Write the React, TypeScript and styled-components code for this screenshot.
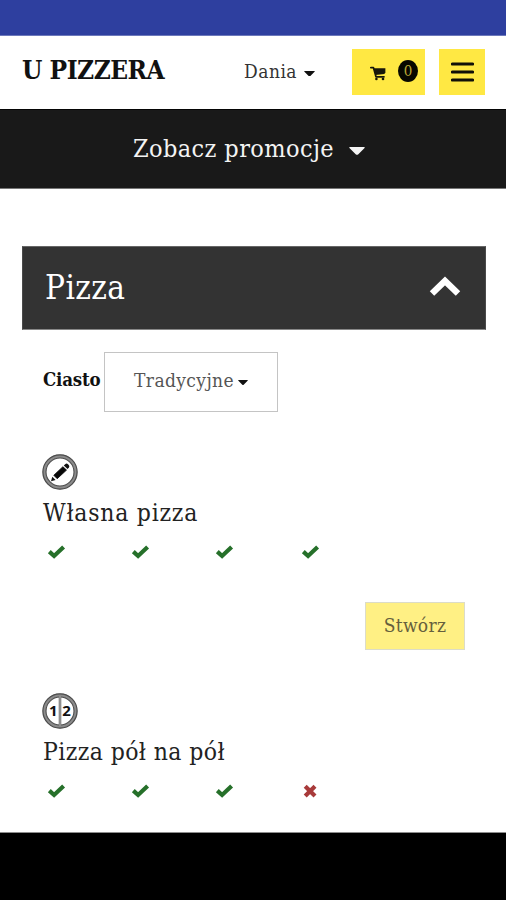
import React from "react";
import styled, { createGlobalStyle } from "styled-components";

const GlobalStyle = createGlobalStyle`
  * { box-sizing: border-box; }
  body { margin: 0; background: #fff; }
  button { appearance: none; border: 0; border-radius: 0; padding: 0; margin: 0; background: none; font: inherit; color: inherit; }
`;

const Screen = styled.div`
  display: flex;
  flex-direction: column;
  width: 506px;
  height: 900px;
  overflow: hidden;
  background: #fff;
  color: #111;
  font-family: "DejaVu Serif Condensed", "DejaVu Serif", serif;
  font-stretch: condensed;
`;

const StatusBar = styled.div`
  flex: 0 0 36px;
  background: #2e3f9f;
  border-bottom: 1px solid #6c78bb;
`;

const Header = styled.header`
  flex: 0 0 73px;
  display: flex;
  align-items: center;
  padding: 0 21px 0 22px;
`;

const Label = styled.span<{ $size: number; $spacing?: number; $bold?: boolean; $color?: string }>`
  font-size: ${(p) => p.$size}px;
  line-height: 1.2;
  letter-spacing: ${(p) => p.$spacing ?? 0}px;
  font-weight: ${(p) => (p.$bold ? 700 : 400)};
  color: ${(p) => p.$color ?? "inherit"};
  white-space: nowrap;
`;

const Brand = styled.div`
  width: 222px;
  display: flex;
  margin-bottom: 4px;
`;

const NavLink = styled.button`
  display: flex;
  align-items: center;
  width: 108px;
  margin-bottom: 2px;
`;

const Caret = styled.svg<{ $w: number; $gap: number; $drop?: number }>`
  display: block;
  flex: none;
  width: ${(p) => p.$w}px;
  height: ${(p) => p.$w / 2}px;
  margin: ${(p) => p.$drop ?? 0}px 0 0 ${(p) => p.$gap}px;
  fill: currentColor;
`;

const YellowButton = styled.button<{ $w: number; $ml: number }>`
  display: flex;
  align-items: center;
  justify-content: center;
  flex: none;
  width: ${(p) => p.$w}px;
  height: 46px;
  margin-left: ${(p) => p.$ml}px;
  margin-top: -1px;
  background: #ffe843;
`;

const CartIcon = styled.svg`
  width: 16px;
  height: 15px;
  margin: 2px 12px 0 11px;
`;

const Badge = styled.span`
  display: flex;
  align-items: center;
  justify-content: center;
  width: 20px;
  height: 22px;
  border-radius: 50%;
  background: #080800;
  margin-bottom: 2px;
`;

const MenuIcon = styled.svg`
  width: 23px;
  height: 20px;
`;

const PromoBar = styled.button`
  flex: 0 0 80px;
  display: flex;
  align-items: center;
  padding-left: 133px;
  color: #f3f3f3;
  background: #191919;
  border-top: 1px solid #050505;
  border-bottom: 1px solid #777;
`;

const Main = styled.main`
  flex: 1;
  padding: 57px 20px 0 22px;
`;

const SectionHeader = styled.div`
  display: flex;
  align-items: center;
  justify-content: space-between;
  height: 84px;
  padding: 0 24px 0 22px;
  color: #fff;
  background: #333;
  border: 1px solid #4a4a4a;
  border-top-color: #666;
  border-bottom-color: #888;
`;

const Chevron = styled.svg`
  width: 32px;
  height: 22px;
  margin-bottom: 4px;
`;

const DoughRow = styled.div`
  display: flex;
  align-items: center;
  padding-left: 21px;
  margin-top: 22px;
`;

const DoughLabel = styled.div`
  display: flex;
  width: 61px;
  margin-bottom: 3px;
`;

const Select = styled.button`
  display: flex;
  align-items: center;
  width: 174px;
  height: 60px;
  padding: 0 0 3px 29px;
  border: 1px solid #c4c4c4;
`;

const Item = styled.article<{ $mt: number }>`
  display: flex;
  flex-direction: column;
  align-items: flex-start;
  margin-top: ${(p) => p.$mt}px;
  padding: 0 21px;
`;

const RoundIcon = styled.svg`
  display: block;
  width: 36px;
  height: 36px;
  margin: 0 0 9px -1px;
`;

const Title = styled.h2`
  display: flex;
  align-items: center;
  margin: 0;
  height: 28px;
`;

const Marks = styled.div`
  display: grid;
  grid-template-columns: 84px 84px 86px 20px;
  padding-left: 4px;
  margin-top: 17px;
  height: 16px;
`;

const MarkIcon = styled.svg`
  display: block;
  width: 19px;
  height: 16px;
`;

const CreateButton = styled.button`
  display: flex;
  align-items: center;
  justify-content: center;
  align-self: flex-end;
  width: 100px;
  height: 48px;
  margin-top: 42px;
  padding-bottom: 1px;
  border: 1px solid #dcdcc8;
  background: #fff084;
`;

const NavigationBar = styled.div`
  flex: 0 0 68px;
  background: #000;
  border-top: 1px solid #8d8d8d;
`;

function Triangle(props: { w: number; gap: number; drop?: number }) {
  return (
    <Caret viewBox="0 0 12 6" preserveAspectRatio="none" $w={props.w} $gap={props.gap} $drop={props.drop}>
      <path d="M0.4 0H11.6Q12 0.4 11.5 0.9L6.8 5.6Q6 6.2 5.2 5.6L0.5 0.9Q0 0.4 0.4 0Z" />
    </Caret>
  );
}

function Mark({ ok }: { ok: boolean }) {
  return (
    <MarkIcon viewBox="0 0 19 16" fill="none" strokeWidth="4.2">
      {ok ? (
        <path d="M2.3 7.6 7.1 12 16.6 3" stroke="#26702a" />
      ) : (
        <path d="M4.2 3.3 14 13.1M14 3.3 4.2 13.1" stroke="#a83a3a" />
      )}
    </MarkIcon>
  );
}

function Ring() {
  return (
    <>
      <circle cx="18" cy="18" r="15.7" stroke="#8b8b8b" strokeWidth="3.4" fill="none" />
      <circle cx="18" cy="18" r="17.1" stroke="#4d4d4d" strokeWidth="1.2" fill="none" />
      <circle cx="18" cy="18" r="14" stroke="#4d4d4d" strokeWidth="1.1" fill="none" />
    </>
  );
}

function PencilIcon() {
  return (
    <RoundIcon viewBox="0 0 36 36">
      <Ring />
      <path d="M9 27.2 10.3 22.8 13.6 26Z" fill="#111" />
      <path d="M11.8 21.3 20.9 12.7 24.5 16.1 15.2 24.7Z" fill="#080808" stroke="#080808" strokeWidth="0.8" strokeLinejoin="round" />
      <path d="M21.8 11.6 23.2 10.2Q24.6 9 26 10.2L26.7 10.9Q28 12.3 26.9 13.6L25.6 14.9Z" fill="#111" />
    </RoundIcon>
  );
}

const Digit = styled.text`
  font: 700 15px "Noto Sans", sans-serif;
  fill: #111;
`;

function HalvesIcon() {
  return (
    <RoundIcon viewBox="0 0 36 36">
      <Ring />
      <path d="M18 3V33" stroke="#777" strokeWidth="2.6" />
      <path d="M18 3V33" stroke="#bbb" strokeWidth="0.7" />
      <Digit x="7.1" y="23.2">1</Digit>
      <Digit x="20.2" y="23.2">2</Digit>
    </RoundIcon>
  );
}

function MarkRow({ values }: { values: boolean[] }) {
  return (
    <Marks>
      {values.map((ok, i) => (
        <Mark key={i} ok={ok} />
      ))}
    </Marks>
  );
}

export default function App() {
  return (
    <Screen>
      <GlobalStyle />
      <StatusBar />
      <Header>
        <Brand>
          <Label $size={26} $spacing={-0.5} $bold>U PIZZERA</Label>
        </Brand>
        <NavLink>
          <Label $size={19} $spacing={0.5} $color="#333">Dania</Label>
          <Triangle w={11} gap={7} drop={4} />
        </NavLink>
        <YellowButton $w={73} $ml={0}>
          <CartIcon viewBox="0 0 16 15">
            <path d="M0.8 1.6H3.4L6 10.8H14" fill="none" stroke="#17160a" strokeWidth="1.7" strokeLinejoin="round" strokeLinecap="round" />
            <path d="M3.7 2.2H15.4V6.3L14.4 8.1 5.4 9Z" fill="#17160a" />
            <circle cx="6.4" cy="13" r="1.3" fill="#17160a" />
            <circle cx="13" cy="13" r="1.3" fill="#17160a" />
          </CartIcon>
          <Badge>
            <Label $size={15} $color="#b9a936">0</Label>
          </Badge>
        </YellowButton>
        <YellowButton $w={46} $ml={14}>
          <MenuIcon viewBox="0 0 23 20">
            <path d="M1.5 2H21.5M1.5 10H21.5M1.5 18H21.5" stroke="#111008" strokeWidth="3.2" strokeLinecap="round" />
          </MenuIcon>
        </YellowButton>
      </Header>
      <PromoBar>
        <Label $size={25} $spacing={0.4}>Zobacz promocje</Label>
        <Triangle w={16} gap={15} drop={4} />
      </PromoBar>
      <Main>
        <SectionHeader>
          <Label $size={33} $spacing={0.4}>Pizza</Label>
          <Chevron viewBox="0 0 32 22">
            <path d="M3 18.5 16 6 29 18.5" fill="none" stroke="#fff" strokeWidth="6.4" />
          </Chevron>
        </SectionHeader>
        <DoughRow>
          <DoughLabel>
            <Label $size={18.5} $spacing={-0.2} $bold>Ciasto</Label>
          </DoughLabel>
          <Select>
            <Label $size={19} $spacing={0.4} $color="#555">Tradycyjne</Label>
            <Triangle w={10} gap={4} drop={4} />
          </Select>
        </DoughRow>
        <Item $mt={42}>
          <PencilIcon />
          <Title>
            <Label $size={24.5} $spacing={0.75} $color="#222">Własna pizza</Label>
          </Title>
          <MarkRow values={[true, true, true, true]} />
          <CreateButton>
            <Label $size={19} $spacing={0.3} $color="#655f3d">Stwórz</Label>
          </CreateButton>
        </Item>
        <Item $mt={43}>
          <HalvesIcon />
          <Title>
            <Label $size={24.5} $spacing={0.4} $color="#222">Pizza pół na pół</Label>
          </Title>
          <MarkRow values={[true, true, true, false]} />
        </Item>
      </Main>
      <NavigationBar />
    </Screen>
  );
}
